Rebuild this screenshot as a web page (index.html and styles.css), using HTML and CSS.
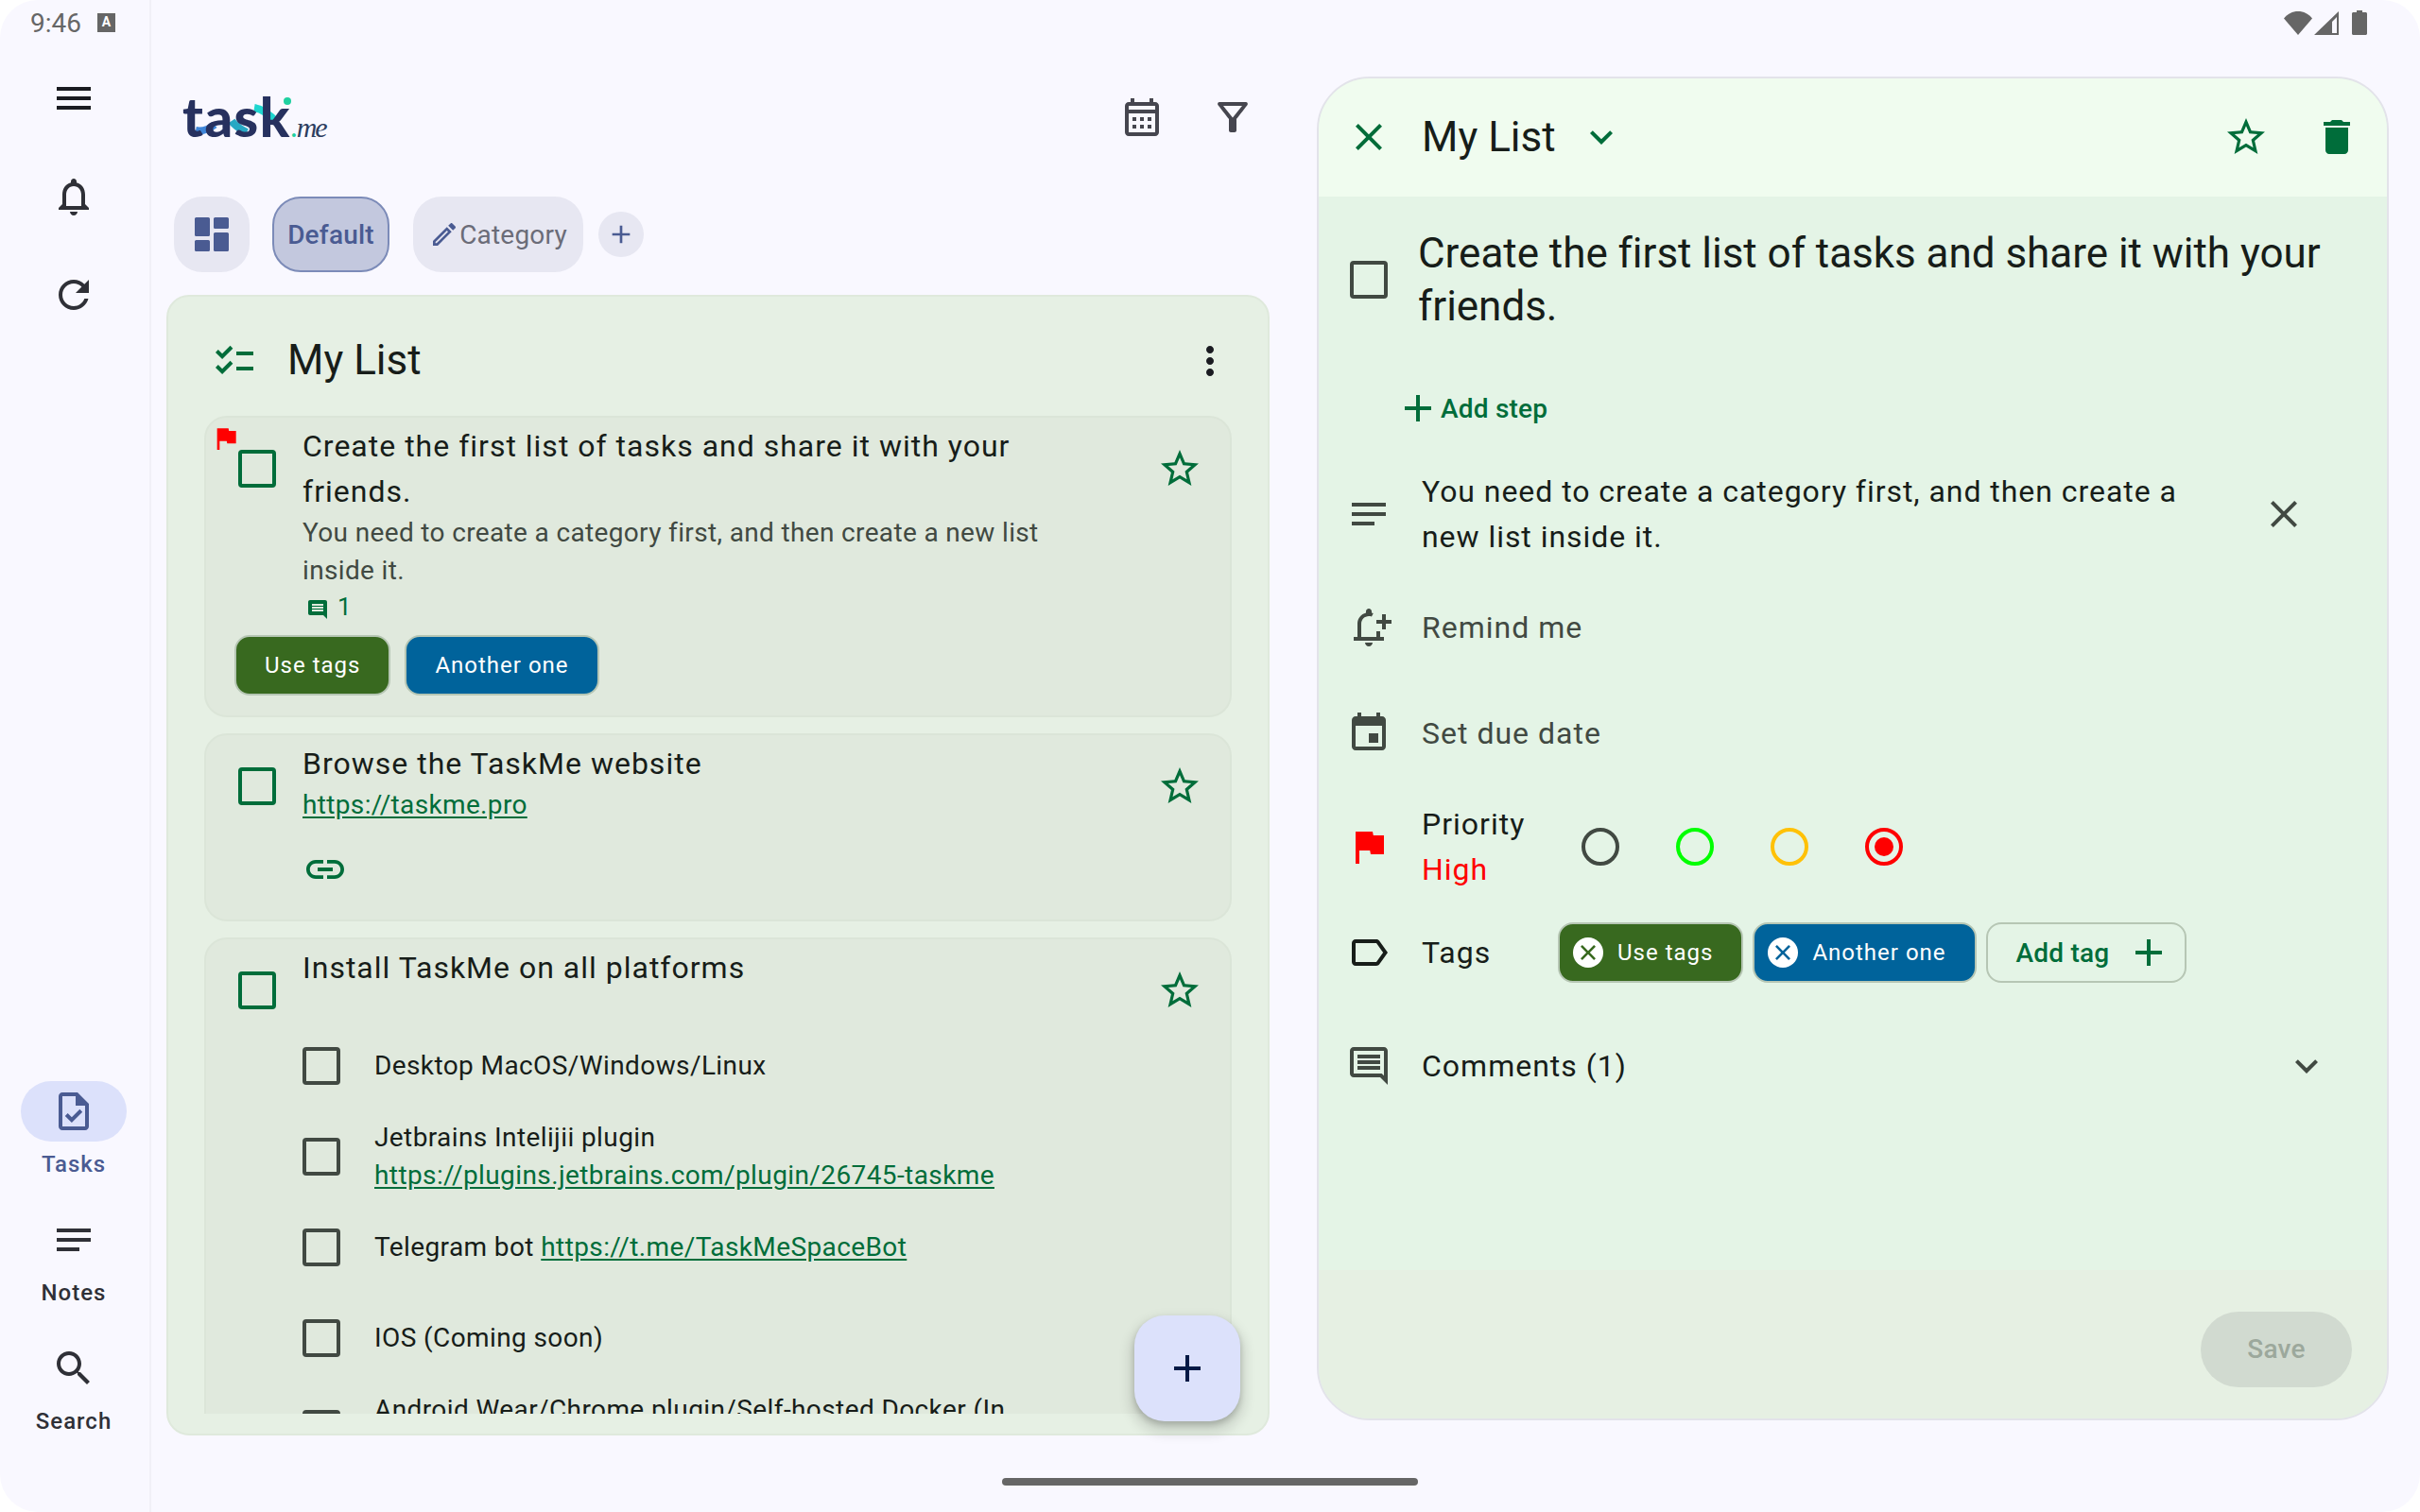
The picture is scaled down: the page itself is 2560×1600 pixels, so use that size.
FILE: index.html
```html
<!DOCTYPE html>
<html>
  <head>
    <meta charset="utf-8" />
    <title>TaskMe</title>
    <link rel="stylesheet" href="styles.css">
  </head>
  <body>
    <!-- icon set -->
    <svg class="sprites">
      <symbol id="i-menu" viewBox="0 0 24 24"><path d="M3 18h18v-2H3v2zm0-5h18v-2H3v2zm0-7v2h18V6H3z"/></symbol>
      <symbol id="i-bell" viewBox="0 0 24 24"><path d="M12 22c1.1 0 2-.9 2-2h-4c0 1.1.9 2 2 2zm6-6v-5c0-3.07-1.63-5.64-4.5-6.32V4c0-.83-.67-1.5-1.5-1.5s-1.5.67-1.5 1.5v.68C7.64 5.36 6 7.92 6 11v5l-2 2v1h16v-1l-2-2zm-2 1H8v-6c0-2.48 1.51-4.5 4-4.5s4 2.02 4 4.5v6z"/></symbol>
      <symbol id="i-refresh" viewBox="0 0 24 24"><path d="M17.65 6.35C16.2 4.9 14.21 4 12 4c-4.42 0-7.99 3.58-7.99 8s3.57 8 7.99 8c3.73 0 6.84-2.55 7.73-6h-2.08c-.82 2.33-3.04 4-5.65 4-3.31 0-6-2.69-6-6s2.69-6 6-6c1.66 0 3.14.69 4.22 1.78L13 11h7V4l-2.35 2.35z"/></symbol>
      <symbol id="i-task" viewBox="0 0 24 24"><path d="M14 2H6c-1.1 0-1.99.9-1.99 2L4 20c0 1.1.89 2 1.99 2H18c1.1 0 2-.9 2-2V8l-6-6zm4 18H6V4h7v5h5v11zm-9.18-6.95L7.4 14.46 10.94 18l5.66-5.66-1.41-1.41-4.24 4.24-2.13-2.12z"/></symbol>
      <symbol id="i-notes" viewBox="0 0 24 24"><path d="M21 11.01L3 11v2h18zM3 16h12v2H3zM21 6H3v2.01L21 8z"/></symbol>
      <symbol id="i-search" viewBox="0 0 24 24"><path d="M15.5 14h-.79l-.28-.27C15.41 12.59 16 11.11 16 9.5 16 5.91 13.09 3 9.5 3S3 5.91 3 9.5 5.91 16 9.5 16c1.61 0 3.09-.59 4.23-1.57l.27.28v.79l5 4.99L20.49 19l-4.99-5zm-6 0C7.01 14 5 11.99 5 9.5S7.01 5 9.5 5 14 7.01 14 9.5 11.99 14 9.5 14z"/></symbol>
      <symbol id="i-dashboard" viewBox="0 0 24 24"><path d="M3.8 3h6.4c.44 0 .8.36.8.8v8.4c0 .44-.36.8-.8.8H3.8c-.44 0-.8-.36-.8-.8V3.8c0-.44.36-.8.8-.8zm0 12h6.4c.44 0 .8.36.8.8v4.4c0 .44-.36.8-.8.8H3.8c-.44 0-.8-.36-.8-.8v-4.4c0-.44.36-.8.8-.8zm10-4h6.4c.44 0 .8.36.8.8v8.4c0 .44-.36.8-.8.8h-6.4c-.44 0-.8-.36-.8-.8v-8.4c0-.44.36-.8.8-.8zm0-8h6.4c.44 0 .8.36.8.8v4.4c0 .44-.36.8-.8.8h-6.4c-.44 0-.8-.36-.8-.8V3.8c0-.44.36-.8.8-.8z"/></symbol>
      <symbol id="i-edit" viewBox="0 0 24 24"><path d="M14.06 9.02l.92.92L5.92 19H5v-.92l9.06-9.06M17.66 3c-.25 0-.51.1-.7.29l-1.83 1.83 3.75 3.75 1.83-1.83c.39-.39.39-1.02 0-1.41l-2.34-2.34c-.2-.2-.45-.29-.71-.29zm-3.6 3.19L3 17.25V21h3.75L17.81 9.94l-3.75-3.75z"/></symbol>
      <symbol id="i-add" viewBox="0 0 24 24"><path d="M19 13h-6v6h-2v-6H5v-2h6V5h2v6h6v2z"/></symbol>
      <symbol id="i-calendar" viewBox="0 0 24 24"><path d="M19 4h-1V2h-2v2H8V2H6v2H5c-1.11 0-1.99.9-1.99 2L3 20c0 1.1.89 2 2 2h14c1.1 0 2-.9 2-2V6c0-1.1-.9-2-2-2zm0 16H5V10h14v10zm0-12H5V6h14v2zM9 14H7v-2h2v2zm4 0h-2v-2h2v2zm4 0h-2v-2h2v2zm-8 4H7v-2h2v2zm4 0h-2v-2h2v2zm4 0h-2v-2h2v2z"/></symbol>
      <symbol id="i-filter" viewBox="0 0 24 24"><path d="M7 6h10l-5.01 6.3L7 6zm-2.75-.39C6.27 8.2 10 13 10 13v6c0 .55.45 1 1 1h2c.55 0 1-.45 1-1v-6s3.72-4.8 5.74-7.39c.51-.66.04-1.61-.79-1.61H5.04c-.83 0-1.3.95-.79 1.61z"/></symbol>
      <symbol id="i-checklist" viewBox="0 0 24 24"><path d="M22 7h-9v2h9V7zm0 8h-9v2h9v-2zM5.54 11 2 7.46l1.41-1.41 2.12 2.12 4.24-4.24 1.41 1.41L5.54 11zm0 8L2 15.46l1.41-1.41 2.12 2.12 4.24-4.24 1.41 1.41L5.54 19z"/></symbol>
      <symbol id="i-more" viewBox="0 0 24 24"><path d="M12 8c1.1 0 2-.9 2-2s-.9-2-2-2-2 .9-2 2 .9 2 2 2zm0 2c-1.1 0-2 .9-2 2s.9 2 2 2 2-.9 2-2-.9-2-2-2zm0 6c-1.1 0-2 .9-2 2s.9 2 2 2 2-.9 2-2-.9-2-2-2z"/></symbol>
      <symbol id="i-close" viewBox="0 0 24 24"><path d="M19 6.41L17.59 5 12 10.59 6.41 5 5 6.41 10.59 12 5 17.59 6.41 19 12 13.41 17.59 19 19 17.59 13.41 12z"/></symbol>
      <symbol id="i-star" viewBox="0 0 24 24"><path d="M22 9.24l-7.19-.62L12 2 9.19 8.63 2 9.24l5.46 4.73L5.82 21 12 17.27 18.18 21l-1.63-7.03L22 9.24zM12 15.4l-3.76 2.27 1-4.28-3.32-2.88 4.38-.38L12 6.1l1.71 4.04 4.38.38-3.32 2.88 1 4.28L12 15.4z"/></symbol>
      <symbol id="i-delete" viewBox="0 0 24 24"><path d="M6 19c0 1.1.9 2 2 2h8c1.1 0 2-.9 2-2V7H6v12zM19 4h-3.5l-1-1h-5l-1 1H5v2h14V4z"/></symbol>
      <symbol id="i-expand" viewBox="0 0 24 24"><path d="M16.59 8.59 12 13.17 7.41 8.59 6 10l6 6 6-6z"/></symbol>
      <symbol id="i-event" viewBox="0 0 24 24"><path d="M17 12h-5v5h5v-5zM16 1v2H8V1H6v2H5c-1.11 0-1.99.9-1.99 2L3 19c0 1.1.89 2 2 2h14c1.1 0 2-.9 2-2V5c0-1.1-.9-2-2-2h-1V1h-2zm3 18H5V8h14v11z"/></symbol>
      <symbol id="i-flag" viewBox="0 0 24 24"><path d="M14.4 6L14 4H5v17h2v-7h5.6l.4 2h7V6z"/></symbol>
      <symbol id="i-label" viewBox="0 0 24 24"><path d="M17.63 5.84C17.27 5.33 16.67 5 16 5L5 5.01C3.9 5.01 3 5.9 3 7v10c0 1.1.9 1.99 2 1.99L16 19c.67 0 1.27-.33 1.63-.84L22 12l-4.37-6.16zM16 17H5V7h11l3.55 5L16 17z"/></symbol>
      <symbol id="i-comment" viewBox="0 0 24 24"><path d="M21.99 4c0-1.1-.89-2-1.99-2H4c-1.1 0-2 .9-2 2v12c0 1.1.9 2 2 2h14l4 4-.01-18zM20 4v13.17L18.83 16H4V4h16zM6 12h12v2H6zm0-3h12v2H6zm0-3h12v2H6z"/></symbol>
      <symbol id="i-comment-fill" viewBox="0 0 24 24"><path d="M21.99 4c0-1.1-.89-2-1.99-2H4c-1.1 0-2 .9-2 2v12c0 1.1.9 2 2 2h14l4 4-.01-18zM18 14H6v-2h12v2zm0-3H6V9h12v2zm0-3H6V6h12v2z"/></symbol>
      <symbol id="i-link" viewBox="0 0 24 24"><path d="M3.9 12c0-1.71 1.39-3.1 3.1-3.1h4V7H7c-2.76 0-5 2.24-5 5s2.24 5 5 5h4v-1.9H7c-1.71 0-3.1-1.39-3.1-3.1zM8 13h8v-2H8v2zm9-6h-4v1.9h4c1.71 0 3.1 1.39 3.1 3.1s-1.39 3.1-3.1 3.1h-4V17h4c2.76 0 5-2.24 5-5s-2.24-5-5-5z"/></symbol>
      <symbol id="i-remind" viewBox="0 0 24 24"><path d="M10 20h4c0 1.1-.9 2-2 2s-2-.9-2-2zM4 17h16v2H4zM6 10c0-2.79 1.91-5.14 4.5-5.8v-.7c0-.83.67-1.5 1.5-1.5s1.5.67 1.5 1.5v.7c.3.08.6.18.88.3l-.9 1.7c-.47-.13-.96-.2-1.48-.2-2.21 0-4 1.79-4 4v7.5H6V10zM16 14h2v3h-2zM19 5h2v3h3v2h-3v3h-2v-3h-3V8h3z"/></symbol>
      <symbol id="i-chip-close" viewBox="0 0 24 24"><circle cx="12" cy="12" r="12" fill="#fff"/><path d="M18 7.4 16.6 6 12 10.6 7.4 6 6 7.4 10.6 12 6 16.6 7.4 18 12 13.4 16.6 18 18 16.6 13.4 12z"/></symbol>
    </svg>

    <div class="screen">
      <div class="status-bar">
        <div class="status-left">
          <span class="status-time">9:46</span>
          <span class="status-a">A</span>
        </div>
        <div class="status-right">
          <svg class="wifi" viewBox="0 0 30 26"><path d="M0 8.5C4 3.5 9 1 15 1s11 2.5 15 7.5L15 26z"/></svg>
          <svg class="signal" viewBox="0 0 26 25"><path d="M26 0v25H0zM24 6l-5 5v12h5z"/></svg>
          <svg class="battery" viewBox="0 0 16 26"><path d="M5 0h6v2h3.5c.8 0 1.5.7 1.5 1.5v21c0 .8-.7 1.5-1.5 1.5h-13C.7 26 0 25.3 0 24.5v-21C0 2.7.7 2 1.5 2H5z"/></svg>
        </div>
      </div>

      <nav class="rail">
        <div class="rail-top">
          <div class="rail-btn menu-btn"><svg class="icon"><use href="#i-menu"/></svg></div>
          <div class="rail-btn"><svg class="icon"><use href="#i-bell"/></svg></div>
          <div class="rail-btn"><svg class="icon"><use href="#i-refresh"/></svg></div>
        </div>
        <div class="rail-bottom">
          <div class="rail-item active">
            <div class="rail-pill"><svg class="icon"><use href="#i-task"/></svg></div>
            <div class="rail-label">Tasks</div>
          </div>
          <div class="rail-item">
            <div class="rail-pill"><svg class="icon"><use href="#i-notes"/></svg></div>
            <div class="rail-label">Notes</div>
          </div>
          <div class="rail-item">
            <div class="rail-pill"><svg class="icon"><use href="#i-search"/></svg></div>
            <div class="rail-label">Search</div>
          </div>
        </div>
      </nav>

      <main class="list-column">
        <header class="top-bar">
          <div class="logo">
            <svg class="logo-ribbon" viewBox="0 0 150 41">
              <path d="M14 36 Q24 38 34 30" class="rib-blue"/>
              <path d="M52 26 Q56 32 68 38" class="rib-teal"/>
              <path d="M76 12 Q88 14 100 28" class="rib-cyan"/>
              <circle cx="111" cy="5" r="4" class="rib-dot"/>
            </svg>
            <span class="logo-task">task</span><span class="logo-dot">.</span><span class="logo-me">me</span>
          </div>
          <div class="top-actions">
            <svg class="icon"><use href="#i-calendar"/></svg>
            <svg class="icon"><use href="#i-filter"/></svg>
          </div>
        </header>

        <div class="tabs">
          <div class="tab tab-grid"><svg class="icon"><use href="#i-dashboard"/></svg></div>
          <div class="tab tab-active">Default</div>
          <div class="tab tab-category"><svg class="icon-sm"><use href="#i-edit"/></svg>Category</div>
          <div class="tab-add"><svg class="icon-add"><use href="#i-add"/></svg></div>
        </div>

        <section class="card">
          <div class="card-head">
            <svg class="icon green"><use href="#i-checklist"/></svg>
            <h2 class="card-title">My List</h2>
            <svg class="icon more"><use href="#i-more"/></svg>
          </div>

          <div class="task-list">
            <article class="task">
              <svg class="task-flag"><use href="#i-flag"/></svg>
              <div class="task-row">
                <div class="check green-check"></div>
                <div class="task-body">
                  <div class="task-title">Create the first list of tasks and share it with your friends.</div>
                  <div class="task-desc">You need to create a category first, and then create a new list inside it.</div>
                  <div class="task-count"><svg class="icon-count"><use href="#i-comment-fill"/></svg><span>1</span></div>
                </div>
                <svg class="icon green star"><use href="#i-star"/></svg>
              </div>
              <div class="task-tags">
                <span class="tag tag-green">Use tags</span>
                <span class="tag tag-blue">Another one</span>
              </div>
            </article>

            <article class="task task-web">
              <div class="task-row">
                <div class="check green-check"></div>
                <div class="task-body">
                  <div class="task-title">Browse the TaskMe website</div>
                  <a class="task-url">https://taskme.pro</a>
                  <svg class="icon green link-icon"><use href="#i-link"/></svg>
                </div>
                <svg class="icon green star"><use href="#i-star"/></svg>
              </div>
            </article>

            <article class="task">
              <div class="task-row">
                <div class="check green-check"></div>
                <div class="task-body">
                  <div class="task-title">Install TaskMe on all platforms</div>
                  <div class="subtasks">
                    <div class="subtask"><div class="check"></div><div>Desktop MacOS/Windows/Linux</div></div>
                    <div class="subtask"><div class="check"></div><div>Jetbrains Intelijii plugin<br><a>https://plugins.jetbrains.com/plugin/26745-taskme</a></div></div>
                    <div class="subtask"><div class="check"></div><div>Telegram bot <a>https://t.me/TaskMeSpaceBot</a></div></div>
                    <div class="subtask"><div class="check"></div><div>IOS (Coming soon)</div></div>
                    <div class="subtask"><div class="check"></div><div>Android Wear/Chrome plugin/Self-hosted Docker (In development)</div></div>
                  </div>
                </div>
                <svg class="icon green star"><use href="#i-star"/></svg>
              </div>
            </article>
          </div>

          <button class="fab"><svg class="icon"><use href="#i-add"/></svg></button>
        </section>
      </main>

      <aside class="panel">
        <div class="panel-head">
          <svg class="icon green"><use href="#i-close"/></svg>
          <span class="panel-list">My List</span>
          <svg class="icon green chevron"><use href="#i-expand"/></svg>
          <svg class="icon green head-star"><use href="#i-star"/></svg>
          <svg class="icon green"><use href="#i-delete"/></svg>
        </div>

        <div class="panel-body">
          <div class="panel-task">
            <div class="check"></div>
            <div class="panel-title">Create the first list of tasks and share it with your friends.</div>
          </div>

          <div class="add-step"><svg class="icon-step"><use href="#i-add"/></svg>Add step</div>

          <div class="field field-desc">
            <svg class="icon field-icon"><use href="#i-notes"/></svg>
            <div class="desc-text">You need to create a category first, and then create a new list inside it.</div>
            <svg class="icon desc-close"><use href="#i-close"/></svg>
          </div>

          <div class="field field-remind">
            <svg class="icon field-icon"><use href="#i-remind"/></svg>
            <div class="muted">Remind me</div>
          </div>

          <div class="field field-date">
            <svg class="icon field-icon"><use href="#i-event"/></svg>
            <div class="muted">Set due date</div>
          </div>

          <div class="field field-priority">
            <svg class="icon field-icon red"><use href="#i-flag"/></svg>
            <div class="priority-label">
              <div>Priority</div>
              <div class="red-text">High</div>
            </div>
            <div class="radios">
              <span class="radio radio-none"></span>
              <span class="radio radio-low"></span>
              <span class="radio radio-mid"></span>
              <span class="radio radio-high"></span>
            </div>
          </div>

          <div class="field field-tags">
            <svg class="icon field-icon dark"><use href="#i-label"/></svg>
            <div class="tags-label">Tags</div>
            <div class="chips">
              <span class="chip tag-green"><svg class="chip-x x-green"><use href="#i-chip-close"/></svg>Use tags</span>
              <span class="chip tag-blue"><svg class="chip-x x-blue"><use href="#i-chip-close"/></svg>Another one</span>
              <span class="chip chip-add">Add tag<svg class="icon green"><use href="#i-add"/></svg></span>
            </div>
          </div>

          <div class="field field-comments">
            <svg class="icon field-icon"><use href="#i-comment"/></svg>
            <div>Comments (1)</div>
            <svg class="icon comments-chevron"><use href="#i-expand"/></svg>
          </div>
        </div>

        <div class="panel-foot">
          <button class="save">Save</button>
        </div>
      </aside>

      <div class="home-bar"></div>
    </div>
  </body>
</html>
```

FILE: styles.css
```css
* {
  margin: 0;
  padding: 0;
  box-sizing: border-box;
}

html {
  background-color: #fff;
}

body {
  font-family: Roboto, "Noto Sans", sans-serif;
  font-size: 32px;
  letter-spacing: 1px;
  color: #171d19;
}

.sprites {
  display: none;
}

.icon {
  display: block;
  flex: none;
  width: 48px;
  height: 48px;
  fill: #1a1b21;
}

.green {
  fill: #006d3a;
}

.screen {
  position: relative;
  display: flex;
  width: 2560px;
  height: 1600px;
  overflow: hidden;
  border-radius: 40px;
  background-color: #f9f8ff;
}

/* system bars */
.status-bar {
  position: absolute;
  top: 0;
  left: 0;
  right: 0;
  height: 48px;
  display: flex;
  justify-content: space-between;
  align-items: center;
  color: #666;
}

.status-left {
  display: flex;
  align-items: center;
  gap: 17px;
  padding-left: 32px;
}

.status-time {
  font-size: 28px;
  letter-spacing: 0;
}

.status-a {
  width: 19px;
  height: 20px;
  background-color: #666;
  color: #fff;
  font-size: 14px;
  font-weight: 700;
  letter-spacing: 0;
  line-height: 18px;
  text-align: center;
}

.status-right {
  display: flex;
  align-items: center;
  padding-right: 56px;
}

.status-right svg {
  display: block;
  fill: #666;
}

.wifi {
  width: 30px;
  height: 26px;
}

.signal {
  width: 26px;
  height: 25px;
  margin-left: 2px;
}

.battery {
  width: 16px;
  height: 26px;
  margin-left: 14px;
}

.home-bar {
  position: absolute;
  left: 1060px;
  top: 1564px;
  width: 440px;
  height: 8px;
  border-radius: 4px;
  background-color: #666;
}

/* nav rail */
.rail {
  flex: none;
  width: 160px;
  display: flex;
  flex-direction: column;
  justify-content: space-between;
  padding: 52px 2px 80px 0;
  border-right: 2px solid #f1f0f7;
}

.rail-btn {
  height: 104px;
  display: flex;
  align-items: center;
  justify-content: center;
}

.rail-btn .icon {
  fill: #2f3037;
}

.rail-btn.menu-btn .icon {
  fill: #1a1b21;
}

.rail-bottom {
  display: flex;
  flex-direction: column;
  gap: 32px;
}

.rail-item {
  display: flex;
  flex-direction: column;
  align-items: center;
  gap: 8px;
}

.rail-pill {
  width: 112px;
  height: 64px;
  display: flex;
  align-items: center;
  justify-content: center;
  border-radius: 32px;
}

.rail-pill .icon {
  fill: #2f3037;
}

.rail-label {
  font-size: 24px;
  font-weight: 500;
  line-height: 32px;
  color: #2f3037;
}

.active .rail-pill {
  background-color: #dce1fb;
}

.active .rail-pill .icon {
  fill: #4a5b92;
}

.active .rail-label {
  color: #4a5b92;
}

/* left column */
.list-column {
  flex: none;
  width: 1167px;
  height: 1600px;
  margin-left: 16px;
  display: flex;
  flex-direction: column;
  padding: 84px 0 81px;
}

.top-bar {
  flex: none;
  height: 80px;
  margin-bottom: 44px;
  display: flex;
  align-items: center;
  justify-content: space-between;
  padding: 0 15px 0 17px;
}

.logo {
  position: relative;
  width: 150px;
  height: 41px;
  margin-bottom: 3px;
  display: flex;
  align-items: baseline;
  line-height: 41px;
  white-space: nowrap;
  letter-spacing: 0;
}

.logo-ribbon {
  position: absolute;
  left: 0;
  top: 0;
  width: 150px;
  height: 41px;
  fill: none;
  stroke-width: 8;
}

.rib-blue {
  stroke: #3f86d8;
}

.rib-teal {
  stroke: #27a8c4;
}

.rib-cyan {
  stroke: #1fd6cf;
}

.rib-dot {
  fill: #1fd0a0;
  stroke: none;
}

.logo-task {
  position: relative;
  font-family: Lato, sans-serif;
  font-size: 58px;
  font-weight: 900;
  line-height: 41px;
  color: #27315f;
  letter-spacing: 1.5px;
}

.logo-dot {
  position: relative;
  font-family: Lato, sans-serif;
  font-size: 24px;
  font-weight: 900;
  color: #1fd0a0;
}

.logo-me {
  position: relative;
  font-family: "Liberation Serif", serif;
  font-size: 30px;
  font-style: italic;
  letter-spacing: -2px;
  color: #2d3e5f;
}

.top-actions {
  display: flex;
  gap: 48px;
}

.top-actions .icon {
  fill: #46464f;
}

.tabs {
  flex: none;
  height: 80px;
  margin-bottom: 24px;
  padding-left: 8px;
  display: flex;
  align-items: center;
  font-size: 28px;
  letter-spacing: 0.2px;
}

.tab {
  height: 80px;
  display: flex;
  align-items: center;
  justify-content: center;
  border-radius: 30px;
  background-color: #e7e7f2;
}

.tab-grid {
  width: 80px;
  margin-right: 24px;
}

.tab-grid .icon {
  fill: #4a5b92;
}

.tab-active {
  width: 124px;
  margin-right: 25px;
  background-color: #c3c8de;
  border: 2px solid #7c8bb8;
  color: #4a5b92;
  font-weight: 500;
}

.tab-category {
  width: 180px;
  margin-right: 16px;
  color: #6b6c78;
  gap: 0;
}

.icon-sm {
  width: 32px;
  height: 32px;
  fill: #4a5b92;
}

.tab-add {
  width: 48px;
  height: 48px;
  display: flex;
  align-items: center;
  justify-content: center;
  border-radius: 24px;
  background-color: #e7e7f2;
}

.icon-add {
  width: 32px;
  height: 32px;
  fill: #4a5b92;
}

/* list card */
.card {
  position: relative;
  flex: 1;
  min-height: 0;
  display: flex;
  flex-direction: column;
  padding-bottom: 21px;
  background-color: #e6f0e4;
  border: 2px solid #dfe9dc;
  border-radius: 24px;
}

.card-head {
  flex: none;
  height: 126px;
  display: flex;
  align-items: center;
  padding: 10px 0 0 46px;
}

.card-title {
  margin: 0 0 3px 32px;
  font-size: 44px;
  font-weight: 400;
  letter-spacing: 0;
}

.more {
  margin-left: auto;
  margin-right: 37px;
}

.task-list {
  flex: 1;
  min-height: 0;
  margin: 0 38px;
  display: flex;
  flex-direction: column;
  gap: 17px;
  overflow: hidden;
}

.task {
  position: relative;
  flex: none;
  padding: 6px 0 21px;
  background-color: #e0e9dd;
  border: 2px solid #dbe5d8;
  border-radius: 24px;
}

.task-web {
  padding-bottom: 29px;
}

.task-flag {
  position: absolute;
  left: 5px;
  top: 6px;
  width: 32px;
  height: 32px;
  fill: #ff0000;
}

.task-row {
  display: flex;
  align-items: flex-start;
  padding-left: 34px;
}

.check {
  flex: none;
  width: 40px;
  height: 40px;
  border: 4px solid #414942;
  border-radius: 4px;
}

.green-check {
  margin-top: 28px;
  margin-right: 28px;
  border-color: #006d3a;
}

.task-body {
  flex: none;
  width: 820px;
}

.star {
  margin-top: 24px;
  margin-left: 84px;
}

.task-title {
  line-height: 48px;
}

.task-desc {
  font-size: 28px;
  letter-spacing: 0.35px;
  line-height: 40px;
  color: #414942;
}

.task-count {
  height: 36px;
  display: flex;
  align-items: center;
  gap: 9px;
  padding-left: 4px;
  font-size: 26px;
  line-height: 32px;
  color: #006d3a;
}

.icon-count {
  width: 24px;
  height: 24px;
  margin-top: 5px;
  fill: #006d3a;
}

.task-tags {
  display: flex;
  gap: 15px;
  margin-top: 12px;
  padding-left: 30px;
}

.tag {
  height: 64px;
  display: flex;
  align-items: center;
  padding: 0 30px;
  border: 2px solid #b6c6b4;
  border-radius: 16px;
  font-size: 24px;
  letter-spacing: 1px;
  color: #fff;
}

.tag-green {
  background-color: #38691f;
}

.tag-blue {
  background-color: #00639b;
}

.task-url,
.subtask a {
  color: #006d3a;
  text-decoration: underline;
  text-underline-offset: 3px;
}

.task-url {
  display: block;
  font-size: 28px;
  letter-spacing: 0.35px;
  line-height: 40px;
}

.link-icon {
  margin-top: 24px;
}

.subtasks {
  margin-top: 32px;
}

.subtask {
  min-height: 96px;
  display: flex;
  align-items: center;
  gap: 36px;
  font-size: 28px;
  letter-spacing: 0.4px;
  line-height: 40px;
}

.fab {
  position: absolute;
  right: 29px;
  bottom: 13px;
  width: 112px;
  height: 112px;
  display: flex;
  align-items: center;
  justify-content: center;
  border: 0;
  border-radius: 32px;
  background-color: #dce1fb;
  box-shadow: 0 8px 12px 6px rgba(0, 0, 0, 0.1), 0 4px 6px rgba(0, 0, 0, 0.2);
}

.fab .icon {
  fill: #021945;
}

/* detail panel */
.panel {
  flex: none;
  width: 1134px;
  height: 1422px;
  margin-top: 81px;
  margin-left: 50px;
  display: flex;
  flex-direction: column;
  overflow: hidden;
  border: 2px solid #e3e3ea;
  border-radius: 56px;
  background-color: #e4f4e6;
}

.panel-head {
  flex: none;
  height: 125px;
  display: flex;
  align-items: center;
  padding: 0 29px 2px;
  background-color: #f0fcef;
}

.panel-list {
  margin-left: 32px;
  font-size: 44px;
  letter-spacing: 0;
}

.chevron {
  margin-left: 24px;
}

.head-star {
  margin-left: auto;
  margin-right: 48px;
}

.panel-body {
  flex: 1;
  min-height: 0;
  padding-top: 32px;
}

.panel-task {
  display: flex;
  align-items: center;
  padding-left: 33px;
  gap: 32px;
}

.panel-title {
  width: 1000px;
  font-size: 44px;
  letter-spacing: -0.03px;
  line-height: 56px;
}

.add-step {
  height: 56px;
  margin-top: 52px;
  padding-left: 81px;
  display: flex;
  align-items: center;
  font-size: 28px;
  font-weight: 500;
  letter-spacing: 0.2px;
  color: #006d3a;
}

.icon-step {
  width: 48px;
  height: 48px;
  fill: #006d3a;
}

.field {
  display: flex;
  align-items: center;
  padding-left: 29px;
}

.field-icon {
  margin-right: 32px;
  fill: #414942;
}

.red {
  fill: #ff0000;
}

.dark {
  fill: #171d19;
}

.field-desc {
  margin-top: 36px;
  line-height: 48px;
  letter-spacing: 0.95px;
}

.desc-text {
  width: 820px;
}

.desc-close {
  margin-left: 68px;
  fill: #414942;
}

.muted {
  color: #414942;
}

.field-remind,
.field-date {
  height: 72px;
}

.field-remind {
  margin-top: 36px;
}

.field-date {
  margin-top: 40px;
}

.field-priority {
  margin-top: 36px;
  line-height: 48px;
}

.priority-label {
  width: 169px;
}

.red-text {
  color: #ff0000;
}

.radios {
  display: flex;
  gap: 60px;
}

.radio {
  display: flex;
  align-items: center;
  justify-content: center;
  width: 40px;
  height: 40px;
  border: 4px solid #414942;
  border-radius: 50%;
}

.radio-low {
  border-color: #00ff00;
}

.radio-mid {
  border-color: #ffc107;
}

.radio-high {
  border-color: #ff0000;
}

.radio-high::after {
  content: "";
  width: 20px;
  height: 20px;
  border-radius: 50%;
  background-color: #ff0000;
}

.field-tags {
  margin-top: 32px;
  height: 64px;
}

.tags-label {
  width: 144px;
}

.chips {
  display: flex;
  gap: 10px;
}

.chip {
  height: 64px;
  display: flex;
  align-items: center;
  padding: 0 30px 0 14px;
  border: 2px solid #b6c6b4;
  border-radius: 16px;
  font-size: 24px;
  letter-spacing: 1px;
  color: #fff;
}

.chip-x {
  width: 32px;
  height: 32px;
  margin-right: 15px;
}

.x-green {
  fill: #38691f;
}

.x-blue {
  fill: #00639b;
}

.chip-add {
  padding: 0 14px 0 30px;
  font-size: 28px;
  font-weight: 500;
  letter-spacing: 0.2px;
  color: #006d3a;
  gap: 18px;
}

.field-comments {
  margin-top: 52px;
  height: 72px;
}

.comments-chevron {
  margin-left: auto;
  margin-right: 61px;
  fill: #414942;
}

.panel-foot {
  flex: none;
  height: 157px;
  padding: 44px 37px 0 0;
  display: flex;
  justify-content: flex-end;
  align-items: flex-start;
  background-color: #e6f0e3;
}

.save {
  width: 160px;
  height: 80px;
  padding-bottom: 2px;
  border: 0;
  border-radius: 40px;
  background-color: #d1dad0;
  color: #9ca89c;
  font-family: Roboto, sans-serif;
  font-size: 28px;
  font-weight: 500;
  letter-spacing: 0.2px;
}
```
